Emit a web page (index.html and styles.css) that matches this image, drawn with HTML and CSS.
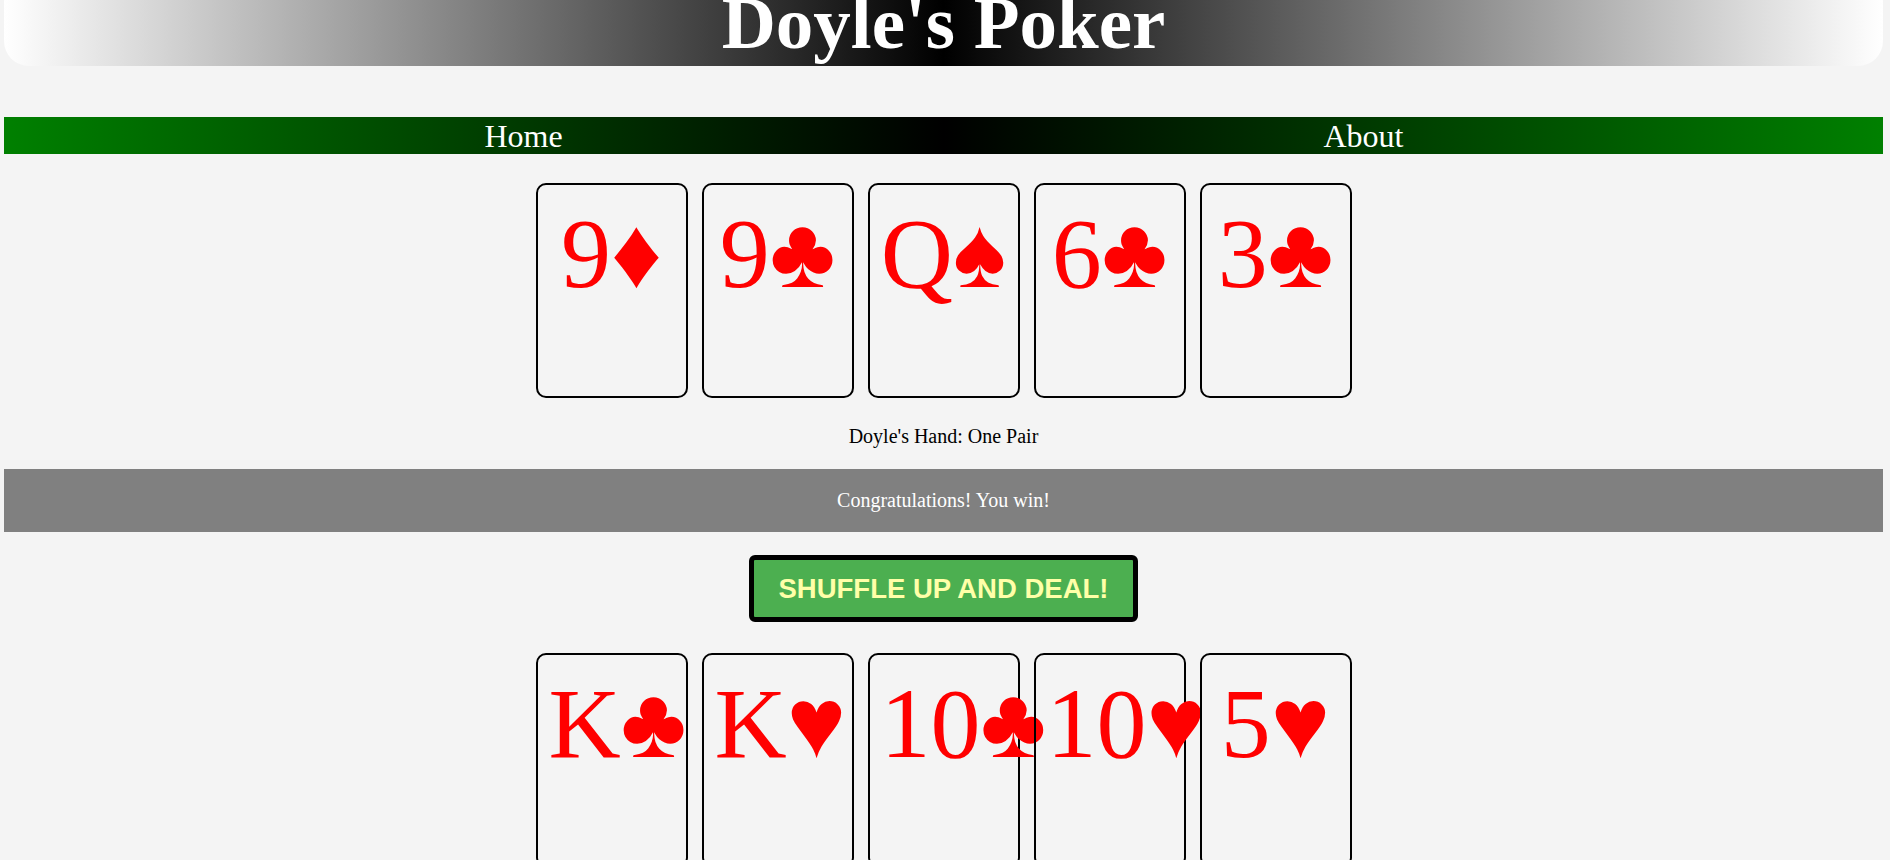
FILE: index.html
```html
<!DOCTYPE html>
<html lang="en">
<head>
<meta charset="utf-8">
<title>Doyle's Poker</title>
<link rel="stylesheet" href="styles.css">
</head>
<body>
<div class="page">
  <header class="banner">
    <h1 class="title">Doyle's Poker</h1>
  </header>
  <nav class="nav">
    <a class="nav-link" href="#">Home</a>
    <a class="nav-link" href="#">About</a>
  </nav>
  <div class="hand">
    <div class="card"><span class="face">9♦</span></div>
    <div class="card"><span class="face">9♣</span></div>
    <div class="card"><span class="face">Q♠</span></div>
    <div class="card"><span class="face">6♣</span></div>
    <div class="card"><span class="face">3♣</span></div>
  </div>
  <p class="hand-label">Doyle's Hand: One Pair</p>
  <div class="result"><p class="result-text">Congratulations! You win!</p></div>
  <div class="actions">
    <button class="deal-btn" type="button">SHUFFLE UP AND DEAL!</button>
  </div>
  <div class="hand hand-player">
    <div class="card"><span class="face">K♣</span></div>
    <div class="card"><span class="face">K♥</span></div>
    <div class="card"><span class="face">10♣</span></div>
    <div class="card"><span class="face">10♥</span></div>
    <div class="card"><span class="face">5♥</span></div>
  </div>
</div>
</body>
</html>
```
FILE: styles.css
```css
html, body {
  margin: 0;
  padding: 0;
  background: #f4f4f4;
  font-family: "Liberation Serif", "Times New Roman", serif;
  overflow: hidden;
}

.page {
  padding: 0 7px 0 4px;
}

.banner {
  display: flex;
  justify-content: center;
  height: 66px;
  background: linear-gradient(to right, #ffffff, #000000, #ffffff);
  border-radius: 0 0 25px 25px;
}

.title {
  margin: -15px 0 0;
  font-size: 75px;
  line-height: 75px;
  font-weight: bold;
  color: #ffffff;
  white-space: nowrap;
}

.nav {
  margin-top: 51px;
  box-sizing: border-box;
  height: 37px;
  padding-top: 2px;
  display: flex;
  justify-content: center;
  background: linear-gradient(to right, #008000, #000000, #008000);
}

.nav-link {
  width: 840px;
  text-align: center;
  font-size: 32px;
  line-height: 35px;
  color: #ffffff;
  text-decoration: none;
}

.hand {
  margin-top: 29px;
  display: flex;
  justify-content: center;
  gap: 14px;
}

.hand-player {
  margin-top: 31px;
}

.card {
  box-sizing: border-box;
  width: 152px;
  height: 215px;
  padding: 11px;
  border: 2px solid #000000;
  border-radius: 10px;
  display: flex;
  justify-content: flex-start;
  align-items: flex-start;
}

.face {
  margin: 0 auto;
  flex: none;
  font-size: 100px;
  line-height: 115px;
  color: #ff0000;
  white-space: nowrap;
}

.hand-label {
  margin: 27px 0 21px;
  text-align: center;
  font-size: 20px;
  line-height: 23px;
  color: #000000;
}

.result {
  background: #808080;
  padding: 20px 0;
}

.result-text {
  margin: 0;
  text-align: center;
  font-size: 20px;
  line-height: 23px;
  color: #ffffff;
}

.actions {
  margin-top: 23px;
  display: flex;
  justify-content: center;
}

.deal-btn {
  font-family: "Liberation Sans", Arial, sans-serif;
  font-size: 27.5px;
  line-height: 32px;
  font-weight: bold;
  color: #ffffa8;
  background: #4caf50;
  border: 5px solid #000000;
  border-radius: 6px;
  padding: 12.5px 24.5px;
  margin: 0;
  cursor: pointer;
}
```
